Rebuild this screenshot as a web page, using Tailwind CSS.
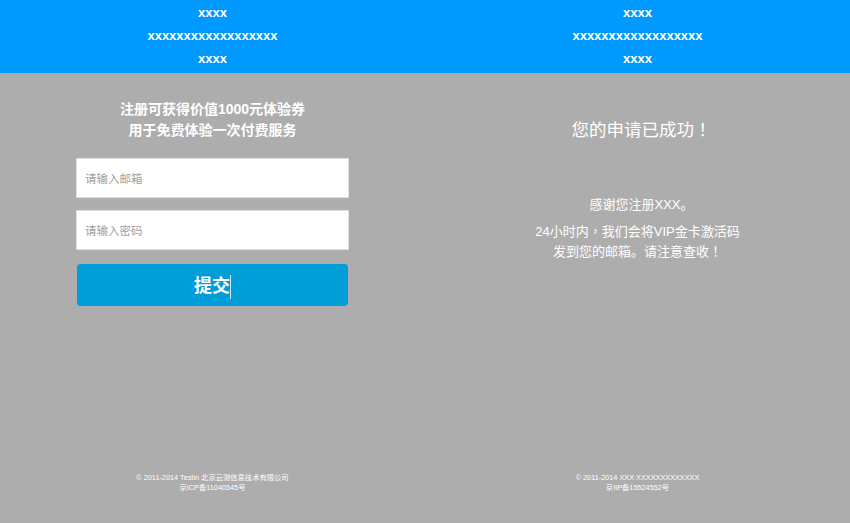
<!DOCTYPE html>
<html lang="zh-CN">
<head>
  <meta charset="UTF-8">
  <title>注册</title>
  <script src="https://cdn.jsdelivr.net/npm/@tailwindcss/browser@4"></script>
</head>
<body class="w-[850px] h-[523px] overflow-hidden bg-[#adadad] text-white font-['Liberation_Sans','Noto_Sans_CJK_SC',sans-serif]">
  <div class="grid grid-cols-2 h-full">
    <!-- 注册 -->
    <div class="flex flex-col h-full">
      <div class="h-[73px] bg-[#0099ff] pt-px text-center text-[13px] font-bold leading-[23px]">
        <p>xxxx</p>
        <p>xxxxxxxxxxxxxxxxxx</p>
        <p>xxxx</p>
      </div>
      <div class="mt-[26px] text-center text-[14px] font-bold leading-[21px]">
        <p>注册可获得价值1000元体验券</p>
        <p>用于免费体验一次付费服务</p>
      </div>
      <form class="mt-[17px] mx-[76px] w-[273px] flex flex-col">
        <input type="text" placeholder="请输入邮箱" class="h-[40px] border border-[#e0e0e0] bg-white px-[8px] pt-[2px] text-[11.5px] outline-none placeholder:text-[#a0a0a0]">
        <input type="password" placeholder="请输入密码" class="mt-[12px] h-[40px] border border-[#e0e0e0] bg-white px-[8px] pt-[2px] text-[11.5px] outline-none placeholder:text-[#a0a0a0]">
        <button type="button" class="mt-[14px] mx-px h-[42px] rounded-[4px] bg-[#009dd9] pt-[3px] text-[18px] font-bold flex items-center justify-center">
          提交<span class="w-px h-6 bg-white/80"></span>
        </button>
      </form>
      <div class="mt-auto mb-[30px] text-center text-[7.3px] leading-[10px]">
        <p>© 2011-2014 Testin 北京云测信息技术有限公司</p>
        <p>京ICP备11040545号</p>
      </div>
    </div>
    <!-- 成功 -->
    <div class="flex flex-col h-full">
      <div class="h-[73px] bg-[#0099ff] pt-px text-center text-[13px] font-bold leading-[23px]">
        <p>xxxx</p>
        <p>xxxxxxxxxxxxxxxxxx</p>
        <p>xxxx</p>
      </div>
      <p class="mt-[44px] pl-[8px] text-center text-[17.5px] leading-[24px]">您的申请已成功<span lang="zh-TW" class="font-['Noto_Sans_CJK_TC']">！</span></p>
      <p class="mt-[53px] pl-[8px] text-center text-[13px] leading-[20px]">感谢您注册XXX。</p>
      <div class="mt-[6px] text-center text-[13px] leading-[19px]">
        <p>24小时内<span lang="zh-TW" class="font-['Noto_Sans_CJK_TC']">，</span>我们会将VIP金卡激活码</p>
        <p>发到您的邮箱。请注意查收<span lang="zh-TW" class="font-['Noto_Sans_CJK_TC']">！</span></p>
      </div>
      <div class="mt-auto mb-[30px] text-center text-[7.3px] leading-[10px]">
        <p>© 2011-2014 XXX XXXXXXXXXXXXX</p>
        <p>京ItP备15524552号</p>
      </div>
    </div>
  </div>
</body>
</html>
